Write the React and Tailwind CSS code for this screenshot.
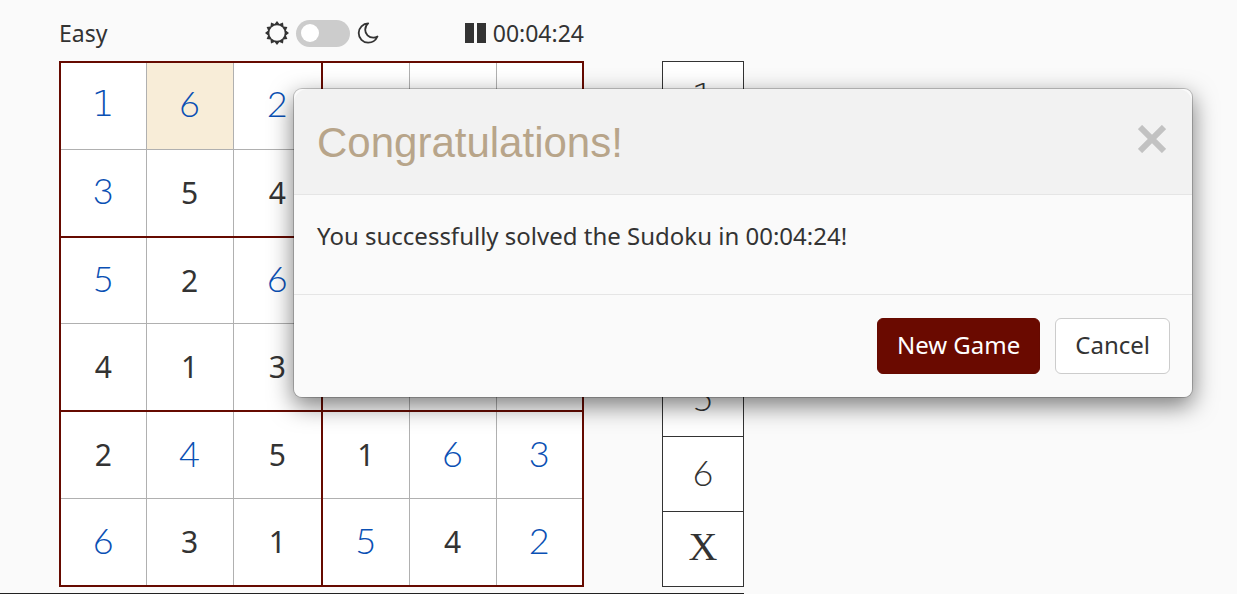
import React from "react";

// "p" marks a digit entered by the player
const board = [
  ["1p", "6p", "2p", "", "", ""],
  ["3p", "5", "4", "", "", ""],
  ["5p", "2", "6p", "", "", ""],
  ["4", "1", "3", "", "", ""],
  ["2", "4p", "5", "1", "6p", "3p"],
  ["6p", "3", "1", "5p", "4", "2p"],
];
const keys = ["1", "2", "3", "4", "5", "6", "X"];

const sunPoints = Array.from({ length: 24 }, (_, i) => {
  const r = i % 2 ? 9.2 : 12;
  const a = (i * Math.PI) / 12;
  return `${12 + r * Math.sin(a)},${12 - r * Math.cos(a)}`;
}).join(" ");

function Sun() {
  return (
    <svg viewBox="0 0 24 24" className="size-6" aria-hidden="true">
      <polygon points={sunPoints} fill="#333" />
      <circle cx="12" cy="12" r="7.700" fill="#fafafa" />
    </svg>
  );
}

function Moon() {
  return (
    <svg viewBox="0 0 22 22" className="size-[22px]" fill="none" stroke="#333" strokeWidth="1.8" strokeLinejoin="round" aria-hidden="true">
      <path d="M11.2 1.4C6 1.6 1.7 5.7 1.7 11c0 5.4 4.200 9.600 9.400 9.600 4.200 0 7.800-2.500 9.400-6.100-1.500.9-2.800 1.200-4.200 1.200C11.700 15.700 8.200 12.300 8.200 7.800c0-2.400 1-4.800 3-6.400Z" />
    </svg>
  );
}

function Pen({ children }) {
  let font = "font-['Lato',sans-serif] font-light text-[36px]";
  if (children === "1") font = "font-['DejaVu_Sans',sans-serif] font-extralight text-[36px]";
  if (children === "X") font = "font-['Liberation_Serif',serif] text-[40px]";
  return <span className={font}>{children}</span>;
}

function Cell({ value, row, col }) {
  const pen = value.endsWith("p");
  const right = col % 3 === 2 ? "border-r-2 border-r-[#660a00]" : "border-r border-r-[#b0b0b0]";
  const bottom = row % 2 === 1 ? "border-b-2 border-b-[#660a00]" : "border-b border-b-[#b0b0b0]";
  const bg = row === 0 && col === 1 ? "bg-[#f8edd8]" : "bg-white";
  return (
    <td className={`h-[87px] p-0 text-center align-middle leading-10 ${right} ${bottom} ${bg}`}>
      {pen ? (
        <span className="text-[#0a50b4]"><Pen>{value[0]}</Pen></span>
      ) : (
        <span className="inline-block pt-[2px] text-[30px]">{value}</span>
      )}
    </td>
  );
}

export default function App() {
  return (
    <div className="relative flex min-h-screen flex-col overflow-hidden bg-[#fafafa] font-['Noto_Sans',sans-serif] text-2xl text-[#333]">
      <main className="flex w-[744px] grow flex-col border-b border-[#222] pl-[59px]">
        <header className="grid h-[61px] w-[525px] grid-cols-[1fr_auto_1fr] items-center pt-[5px] text-[23px]">
          <span>Easy</span>
          <div className="flex items-center gap-[7px]">
            <Sun />
            <label className="flex cursor-pointer">
              <input type="checkbox" aria-label="Dark mode" className="peer sr-only" />
              <span className="flex h-[27px] w-[54px] items-center rounded-full bg-[#ccc] px-[5px]">
                <span className="size-[18px] rounded-full bg-white" />
              </span>
            </label>
            <Moon />
          </div>
          <div className="flex items-center justify-end gap-[7px]">
            <button type="button" aria-label="Pause" className="flex gap-[3px]">
              <span className="h-5 w-[9px] bg-[#333]" />
              <span className="h-5 w-[9px] bg-[#333]" />
            </button>
            <span>00:04:24</span>
          </div>
        </header>
        <div className="flex items-start justify-between">
          <table className="h-[526px] w-[525px] table-fixed border-collapse border-2 border-[#660a00]">
            <colgroup>
              <col className="w-[86px]" />
              <col className="w-[87px]" />
              <col className="w-[89px]" />
              <col className="w-[87px]" />
              <col className="w-[87px]" />
              <col />
            </colgroup>
            <tbody>
              {board.map((cells, row) => (
                <tr key={row}>
                  {cells.map((value, col) => (
                    <Cell key={col} value={value} row={row} col={col} />
                  ))}
                </tr>
              ))}
            </tbody>
          </table>
          <div className="flex w-[82px] flex-col border border-b-0 border-[#333]">
            {keys.map((k) => (
              <button key={k} type="button" className="flex h-[75px] items-center justify-center border-b border-[#333] bg-white pb-1 leading-10">
                <Pen>{k}</Pen>
              </button>
            ))}
          </div>
        </div>
      </main>

      <div className="absolute inset-0 flex items-start justify-end pt-[88px] pr-11">
        <section role="dialog" aria-labelledby="dialog-title" className="w-[900px] max-w-full rounded-[9px] border border-black/20 bg-[#fafafa] bg-clip-padding shadow-[0_8px_23px_rgba(0,0,0,0.5)]">
          <div className="flex items-start justify-between rounded-t-[14px] border-b border-[#e5e5e5] bg-[#f2f2f2] px-[23px] pt-6 pb-[21px]">
            <h1 id="dialog-title" className="font-['Liberation_Sans',sans-serif] text-[42px] leading-[60px] text-[#b8a58a]">
              Congratulations!
            </h1>
            <button type="button" aria-label="Close" className="pt-3 pr-[3px]">
              <svg viewBox="0 0 28 28" className="size-7" stroke="#c2c2c2" strokeWidth="6" aria-hidden="true">
                <path d="M2 2 26 26M26 2 2 26" />
              </svg>
            </button>
          </div>
          <p className="px-[23px] pt-[23px] pb-10 leading-9">You successfully solved the Sudoku in 00:04:24!</p>
          <div className="flex justify-end gap-[15px] border-t border-[#e5e5e5] px-[22px] py-[23px]">
            <button type="button" className="h-14 rounded-md border border-[#660a00] bg-[#6a0a00] px-[19px] pb-[2px] text-white">New Game</button>
            <button type="button" className="h-14 rounded-md border border-[#ccc] bg-white px-[19px] pb-[2px]">Cancel</button>
          </div>
        </section>
      </div>
    </div>
  );
}
